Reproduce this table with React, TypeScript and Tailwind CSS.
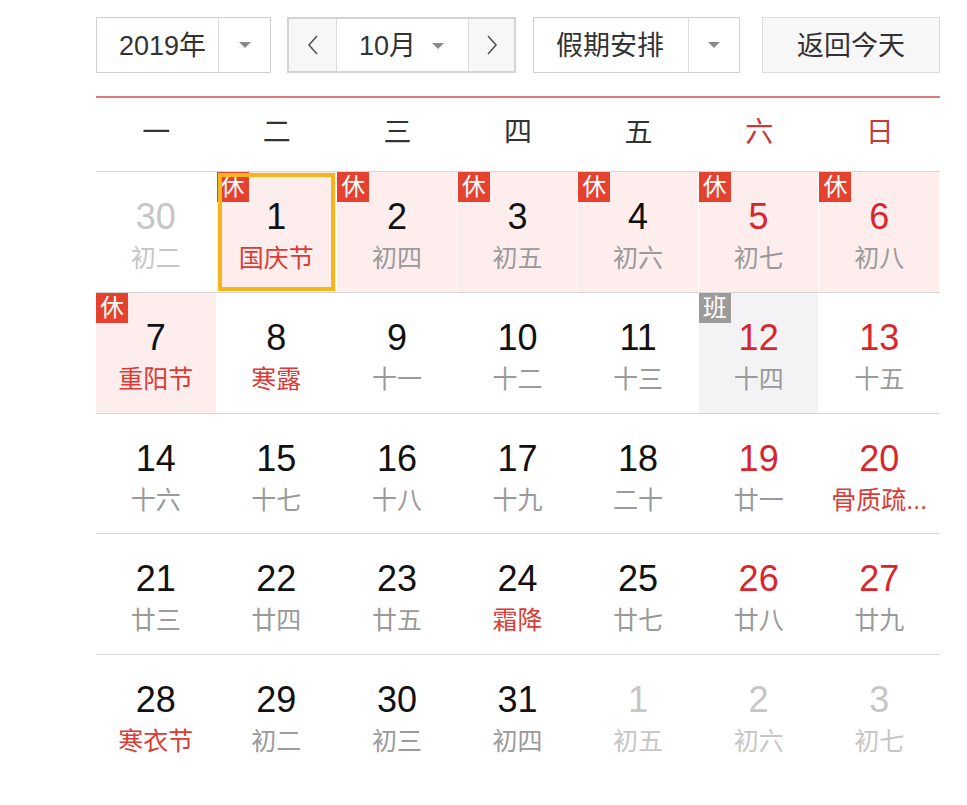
type Day = {
  n: number;
  lunar: string;
  out?: boolean;
  weekend?: boolean;
  fest?: boolean;
  rest?: boolean;
  work?: boolean;
  selected?: boolean;
};

const weekdays = ['一', '二', '三', '四', '五', '六', '日'];

const rows: Day[][] = [
  [
    { n: 30, lunar: '初二', out: true },
    { n: 1, lunar: '国庆节', fest: true, rest: true, selected: true },
    { n: 2, lunar: '初四', rest: true },
    { n: 3, lunar: '初五', rest: true },
    { n: 4, lunar: '初六', rest: true },
    { n: 5, lunar: '初七', rest: true, weekend: true },
    { n: 6, lunar: '初八', rest: true, weekend: true },
  ],
  [
    { n: 7, lunar: '重阳节', fest: true, rest: true },
    { n: 8, lunar: '寒露', fest: true },
    { n: 9, lunar: '十一' },
    { n: 10, lunar: '十二' },
    { n: 11, lunar: '十三' },
    { n: 12, lunar: '十四', weekend: true, work: true },
    { n: 13, lunar: '十五', weekend: true },
  ],
  [
    { n: 14, lunar: '十六' },
    { n: 15, lunar: '十七' },
    { n: 16, lunar: '十八' },
    { n: 17, lunar: '十九' },
    { n: 18, lunar: '二十' },
    { n: 19, lunar: '廿一', weekend: true },
    { n: 20, lunar: '骨质疏...', fest: true, weekend: true },
  ],
  [
    { n: 21, lunar: '廿三' },
    { n: 22, lunar: '廿四' },
    { n: 23, lunar: '廿五' },
    { n: 24, lunar: '霜降', fest: true },
    { n: 25, lunar: '廿七' },
    { n: 26, lunar: '廿八', weekend: true },
    { n: 27, lunar: '廿九', weekend: true },
  ],
  [
    { n: 28, lunar: '寒衣节', fest: true },
    { n: 29, lunar: '初二' },
    { n: 30, lunar: '初三' },
    { n: 31, lunar: '初四' },
    { n: 1, lunar: '初五', out: true },
    { n: 2, lunar: '初六', out: true },
    { n: 3, lunar: '初七', out: true },
  ],
];

function Caret() {
  return (
    <svg width="12" height="7" viewBox="0 0 12 7">
      <path d="M0 0 L12 0 L6 6 Z" fill="#8a8a8a" />
    </svg>
  );
}

function Cell({ d }: { d: Day }) {
  const bg = d.rest ? 'bg-[#fdeded]' : d.work ? 'bg-[#f3f3f5]' : 'bg-white';
  const numColor = d.out ? 'text-[#c6c6c6]' : d.weekend ? 'text-[#d8262d]' : 'text-[#111]';
  const lunarColor = d.out
    ? 'text-[#c6c6c6]'
    : d.fest
      ? 'text-[#dc3b35]'
      : 'text-[#9a9a9a]';

  return (
    <div className={`relative h-[119.75px] border-r border-white ${bg}`}>
      {d.rest && (
        <span className="absolute left-0 top-0 flex h-[30px] w-[32px] items-center justify-center bg-[#e5412f] text-[24px] leading-none text-white">
          休
        </span>
      )}
      {d.work && (
        <span className="absolute left-0 top-0 flex h-[30px] w-[32px] items-center justify-center bg-[#9b9b9b] text-[24px] leading-none text-white">
          班
        </span>
      )}
      {d.selected && (
        <div className="absolute inset-x-[1px] top-[1px] bottom-[1px] border-4 border-[#f5b51b]" />
      )}
      <div className="flex flex-col items-center pt-[26px]">
        <div className={`h-[38px] text-[36px] leading-[38px] ${numColor}`}>{d.n}</div>
        <div className={`mt-[6px] whitespace-nowrap text-center text-[25px] leading-[32px] ${lunarColor}`}>
          {d.lunar}
        </div>
      </div>
    </div>
  );
}

export default function App() {
  return (
    <div
      className="min-h-[805px] bg-white pt-[17px] pl-[96px]"
      style={{ fontFamily: '"Liberation Sans", "Noto Sans CJK SC", sans-serif' }}
    >
      <div className="w-[844px]">
        {/* Controls */}
        <div className="flex h-[56px] text-[27px] text-[#333]">
          <div className="flex w-[175px] border border-[#cfcfcf]">
            <div className="flex w-[122px] items-center border-r border-[#dedede] pl-[22px] pt-[3px]">2019年</div>
            <div className="flex flex-1 items-center justify-center">
              <Caret />
            </div>
          </div>

          <div className="ml-[16px] flex w-[229px] border-2 border-[#d4d4d4] bg-[#f7f7f7]">
            <div className="flex w-[48px] items-center justify-center border-r border-[#dedede]">
              <svg width="12" height="22" viewBox="0 0 12 22">
                <path d="M10 2 L2 11 L10 20" fill="none" stroke="#555" strokeWidth="1.6" />
              </svg>
            </div>
            <div className="flex w-[131px] items-center justify-between bg-white pl-[22px] pr-[24px] pt-[3px]">
              <span>10月</span>
              <Caret />
            </div>
            <div className="flex flex-1 items-center justify-center border-l border-[#dedede]">
              <svg width="12" height="22" viewBox="0 0 12 22">
                <path d="M2 2 L10 11 L2 20" fill="none" stroke="#555" strokeWidth="1.6" />
              </svg>
            </div>
          </div>

          <div className="ml-[17px] flex w-[207px] border border-[#cfcfcf]">
            <div className="flex w-[155px] items-center border-r border-[#dedede] pl-[22px] pt-[3px]">假期安排</div>
            <div className="flex flex-1 items-center justify-center">
              <Caret />
            </div>
          </div>

          <div className="ml-[22px] flex w-[178px] items-center justify-center border border-[#dcdcdc] bg-[#f7f7f7] pt-[2px]">
            返回今天
          </div>
        </div>

        {/* Calendar */}
        <div className="mt-[23px] border-t-2 border-[#e07a7a]">
          <div className="grid h-[73px] grid-cols-7 items-center pb-[4px]">
            {weekdays.map((w, i) => (
              <div
                key={w}
                className={`text-center text-[28px] ${i >= 5 ? 'text-[#c83a3a]' : 'text-[#333]'}`}
              >
                {w}
              </div>
            ))}
          </div>

          {rows.map((r, ri) => (
            <div key={ri} className="grid grid-cols-7 border-t border-[#d6d6d6]">
              {r.map((d, di) => (
                <Cell key={di} d={d} />
              ))}
            </div>
          ))}
        </div>
      </div>
    </div>
  );
}
